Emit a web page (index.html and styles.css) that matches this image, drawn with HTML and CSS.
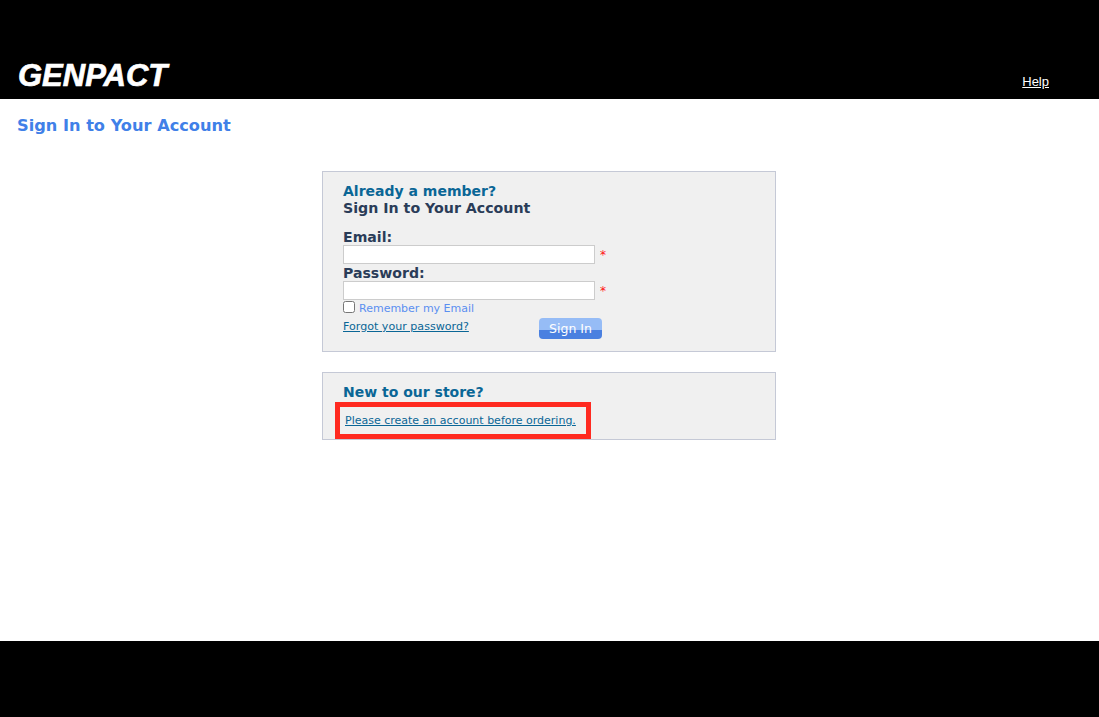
FILE: index.html
```html
<!DOCTYPE html>
<html lang="en">
<head>
<meta charset="utf-8">
<title>Sign In to Your Account</title>
<link rel="stylesheet" href="styles.css">
</head>
<body>
<div class="page">
  <header class="top">
    <span class="logo">GENPACT</span>
    <a class="help" href="#">Help</a>
  </header>
  <main class="main">
    <h1 class="title">Sign In to Your Account</h1>
    <div class="panels">
      <section class="panel signin">
        <h2 class="kicker">Already a member?</h2>
        <h3 class="sub">Sign In to Your Account</h3>
        <form class="form">
          <label class="lbl">Email:</label>
          <div class="row"><input class="txt" type="text"><span class="req">*</span></div>
          <label class="lbl pw">Password:</label>
          <div class="row"><input class="txt" type="password"><span class="req">*</span></div>
          <div class="remember"><input class="chk" type="checkbox"><span>Remember my Email</span></div>
          <div class="actions">
            <a class="forgot" href="#">Forgot your password?</a>
            <button class="btn" type="button">Sign In</button>
          </div>
        </form>
      </section>
      <section class="panel create">
        <h2 class="kicker">New to our store?</h2>
        <div class="mark"><a class="createlink" href="#">Please create an account before ordering.</a></div>
      </section>
    </div>
  </main>
  <footer class="bottom"></footer>
</div>
</body>
</html>
```
FILE: styles.css
```css
* { box-sizing: border-box; }
html, body { margin: 0; padding: 0; }
body { font-family: "DejaVu Sans", Verdana, sans-serif; background: #fff; }
.page { width: 1099px; height: 717px; display: flex; flex-direction: column; overflow: hidden; }
.top { height: 99px; background: #000; display: flex; justify-content: space-between; align-items: flex-end; padding: 0 50px 10px 18px; flex: none; }
.logo { font-family: "Liberation Sans", Arial, sans-serif; font-weight: 700; font-style: italic; font-size: 31px; line-height: 30px; color: #fff; -webkit-text-stroke: 0.7px #fff; margin-bottom: -2px; }
.help { font-family: "Liberation Sans", Arial, sans-serif; font-size: 13px; line-height: 15px; color: #fff; }
.main { flex: 1; background: #fff; padding: 17px 0 0 17px; }
.title { margin: 0; font-size: 16.2px; line-height: 20px; font-weight: 700; color: #4080e8; }
.panels { width: 454px; margin: 35px 0 0 305px; display: flex; flex-direction: column; gap: 20px; }
.panel { background: #f0f0f0; border: 1px solid #c5c9d6; padding: 11px 20px 0; }
.signin { height: 181px; }
.create { height: 68px; }
.kicker { margin: 0; font-size: 14px; line-height: 17px; font-weight: 700; color: #0a6696; }
.sub { margin: 0; font-size: 14.2px; line-height: 17px; font-weight: 700; color: #2a3c58; }
.form { margin-top: 12px; }
.lbl { display: block; font-size: 14.1px; line-height: 16px; font-weight: 700; color: #2a3c58; }
.pw { padding-top: 1px; height: 17px; }
.row { display: flex; align-items: center; gap: 5px; height: 19px; }
.txt { width: 252px; height: 19px; margin: 0; padding: 0 3px; border: 1px solid #ccc; background: #fff; }
.req { color: #ff1010; font-size: 12px; line-height: 19px; padding-top: 1px; }
.remember { display: flex; align-items: flex-start; gap: 4px; height: 16px; font-size: 11px; line-height: 18px; color: #5b8ff0; }
.chk { width: 12px; height: 12px; margin: 1px 0 0; }
.actions { display: flex; align-items: flex-start; justify-content: space-between; width: 259px; margin-top: 1px; }
.forgot { font-size: 11.1px; line-height: 15px; margin-top: 2px; color: #0a6696; }
.btn { width: 63px; height: 21px; margin-top: 1px; padding: 0; border: 0; border-radius: 4px; font-family: inherit; font-size: 12.5px; color: #fff; background: linear-gradient(#96bcf6 0 55%, #4a80e0 55% 100%); }
.mark { display: inline-block; width: 256px; height: 37px; margin: 1px 0 0 -8px; border: 5px solid #ff2a20; padding: 2px 0 0 5px; white-space: nowrap; }
.createlink { font-size: 11px; line-height: 15px; color: #0a6696; }
.bottom { height: 76px; background: #000; flex: none; }
```
